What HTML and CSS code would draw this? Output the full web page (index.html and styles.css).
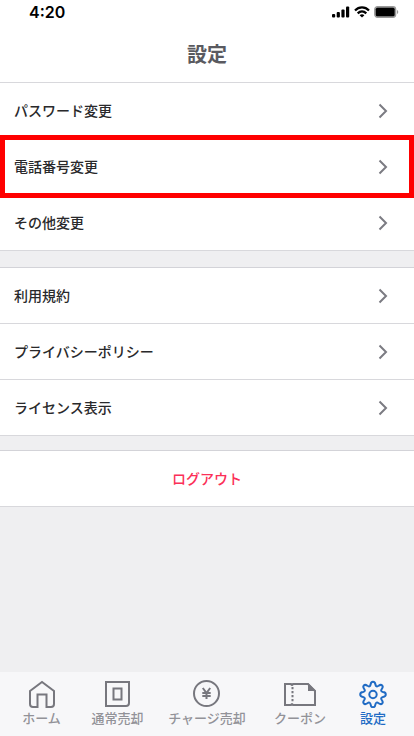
FILE: index.html
```html
<!DOCTYPE html>
<html lang="ja">
<head>
<meta charset="utf-8">
<meta name="viewport" content="width=device-width, initial-scale=1">
<title>設定</title>
<link rel="stylesheet" href="styles.css">
</head>
<body>
<div class="app">
  <div class="status">
    <span class="time">4:20</span>
    <span class="signals">
      <svg width="18" height="12" viewBox="0 0 18 12"><g fill="#000"><rect x="0" y="8" width="3.200" height="3.500" rx="1"/><rect x="4.700" y="6" width="3.200" height="5.500" rx="1"/><rect x="9.400" y="3.500" width="3.200" height="8" rx="1"/><rect x="14" y="0.500" width="3.200" height="11" rx="1"/></g></svg>
      <svg width="16" height="12" viewBox="0 0 16 12"><g fill="none" stroke="#000" stroke-width="2.200"><path d="M1 4.600C5 .4 11 .4 15 4.600"/><path d="M3.700 7.400c2.600-2.600 6-2.600 8.600 0"/></g><path d="M5.600 9.200c1.500-1.300 3.300-1.300 4.800 0L8 11.600z"/></svg>
      <svg width="25" height="12" viewBox="0 0 25 12"><rect x=".7" y=".7" width="21" height="10.600" rx="2.800" fill="#999" stroke="#999" stroke-width="1.200"/><rect x="1.800" y="1.800" width="18.800" height="8.400" rx="1.500"/><path d="M23 4v4c1.700-.8 1.700-3.200 0-4" fill="#999"/></svg>
    </span>
  </div>
  <header class="header"><h1>設定</h1></header>
  <main class="content">
    <nav class="group first">
      <a class="row" href="#password"><span class="label">パスワード変更</span><svg class="chevron" viewBox="0 0 10 16"><path d="M1.500 1.500 8 8l-6.500 6.500"/></svg></a>
      <a class="row selected" href="#phone"><span class="label">電話番号変更</span><svg class="chevron" viewBox="0 0 10 16"><path d="M1.500 1.500 8 8l-6.500 6.500"/></svg></a>
      <a class="row" href="#other"><span class="label">その他変更</span><svg class="chevron" viewBox="0 0 10 16"><path d="M1.500 1.500 8 8l-6.500 6.500"/></svg></a>
    </nav>
    <nav class="group">
      <a class="row" href="#terms"><span class="label">利用規約</span><svg class="chevron" viewBox="0 0 10 16"><path d="M1.500 1.500 8 8l-6.500 6.500"/></svg></a>
      <a class="row" href="#privacy"><span class="label">プライバシーポリシー</span><svg class="chevron" viewBox="0 0 10 16"><path d="M1.500 1.500 8 8l-6.500 6.500"/></svg></a>
      <a class="row" href="#license"><span class="label">ライセンス表示</span><svg class="chevron" viewBox="0 0 10 16"><path d="M1.500 1.500 8 8l-6.500 6.500"/></svg></a>
    </nav>
    <div class="group last">
      <button class="row logout" type="button"><span class="label">ログアウト</span></button>
    </div>
  </main>
  <nav class="tabs">
    <a class="tab" href="#home">
      <svg width="28" height="28" viewBox="0 0 28 28"><path d="M2 11 14 2l12 9v13q0 3-3 3h-4.500V14.500h-9V27H5q-3 0-3-3z"/></svg>
      <span>ホーム</span>
    </a>
    <a class="tab" href="#sell">
      <svg width="28" height="28" viewBox="0 0 28 28"><path d="M2 2h23v21q0 3-3 3H2z"/><path d="M9.500 8.500h8v11h-8z"/></svg>
      <span>通常売却</span>
    </a>
    <a class="tab" href="#charge">
      <svg width="28" height="28" viewBox="0 0 28 28"><circle cx="13.500" cy="13.500" r="12.500"/><path d="m9.800 8 3.700 5 3.700-5M13.500 13v6M9.300 13h8.400M9.300 16h8.400"/></svg>
      <span>チャージ売却</span>
    </a>
    <a class="tab" href="#coupon">
      <svg width="34" height="28" viewBox="0 0 34 28"><path d="M2 4h6q1 2 2 0h15l7 7v14H10q-1-2-2 0H2z"/><path d="M9.500 7v16" stroke-dasharray="2.200 1.800"/><path class="fold" d="M25 3v8h8z"/></svg>
      <span>クーポン</span>
    </a>
    <a class="tab active" href="#settings" aria-current="page">
      <svg width="28" height="28" viewBox="0 0 28 28"><circle cx="14" cy="14.500" r="3.700"/><path d="M11.600 4.500C12 .8 16 .8 16.400 4.500c.4 2 1.600 2.400 3.200 1.300 3-2.200 5.400.2 3.200 3.200-1.100 1.600-.7 2.700 1.200 3.100 3.700.4 3.700 4.400 0 4.800-1.900.4-2.300 1.500-1.200 3.100 2.200 3-.2 5.400-3.200 3.200-1.600-1.100-2.800-.7-3.200 1.300-.4 3.700-4.400 3.700-4.800 0-.4-2-1.600-2.400-3.200-1.300-3 2.200-5.400-.2-3.200-3.200 1.100-1.600.7-2.700-1.200-3.100-3.700-.4-3.700-4.400 0-4.800 1.900-.4 2.300-1.500 1.200-3.100-2.200-3 .2-5.400 3.200-3.200 1.600 1.100 2.800.7 3.200-1.300z"/></svg>
      <span>設定</span>
    </a>
  </nav>
</div>
</body>
</html>
```
FILE: styles.css
```css
* {
  box-sizing: border-box;
}

body {
  margin: 0;
  font-family: "Noto Sans CJK JP", sans-serif;
  background: #efeff1;
}

.app {
  min-height: 100vh;
  display: flex;
  flex-direction: column;
}

.status {
  display: flex;
  justify-content: space-between;
  align-items: center;
  height: 24px;
  padding: 0 15px 0 29px;
  background: #fff;
}

.time {
  font: 600 16px/24px Inter, sans-serif;
}

.signals {
  display: flex;
  gap: 4px;
}

.header {
  padding: 15px 0 13px;
  border-bottom: 1px solid #d8d8dc;
  background: #fff;
}

h1 {
  margin: 0;
  font-size: 20px;
  line-height: 30px;
  font-weight: 700;
  text-align: center;
  color: #5a5a60;
}

.content {
  flex: 1;
}

.group {
  margin-top: 16px;
  border-top: 1px solid #d3d3d8;
  background: #fff;
}

.group.first {
  margin-top: 0;
  border-top: 0;
}

.group.last {
  margin-top: 14px;
}

.row {
  position: relative;
  display: flex;
  align-items: center;
  justify-content: space-between;
  width: 100%;
  height: 56px;
  padding: 0 26px 0 14px;
  border: 0;
  border-bottom: 1px solid #d8d8dc;
  background: #fff;
  color: #29292b;
  font-family: inherit;
  font-size: 14px;
  font-weight: 500;
  text-decoration: none;
}

.label {
  padding-bottom: 2px;
}

.selected::after {
  content: "";
  position: absolute;
  z-index: 1;
  inset: -4px 0;
  border: 5px solid #f00;
}

.chevron {
  width: 10px;
  height: 16px;
  fill: none;
  stroke: #7b7b82;
  stroke-width: 2;
}

.logout {
  justify-content: center;
  padding: 0;
  color: #fb3058;
}

.tabs {
  display: grid;
  grid-template-columns: 83fr 69fr 110fr 76fr 70fr;
  height: 64px;
  padding: 8px 6px 0 0;
  background: #f7f7f9;
}

.tab {
  display: flex;
  flex-direction: column;
  align-items: center;
  color: #929298;
  font-size: 13px;
  line-height: 20px;
  font-weight: 500;
  text-decoration: none;
  white-space: nowrap;
}

.tab svg {
  flex: none;
  fill: none;
  stroke: #77777e;
  stroke-width: 2;
}

.tab .fold {
  fill: #77777e;
  stroke: none;
}

.tab.active {
  color: #206bc4;
}

.tab.active svg {
  stroke: #206bc4;
}
```
